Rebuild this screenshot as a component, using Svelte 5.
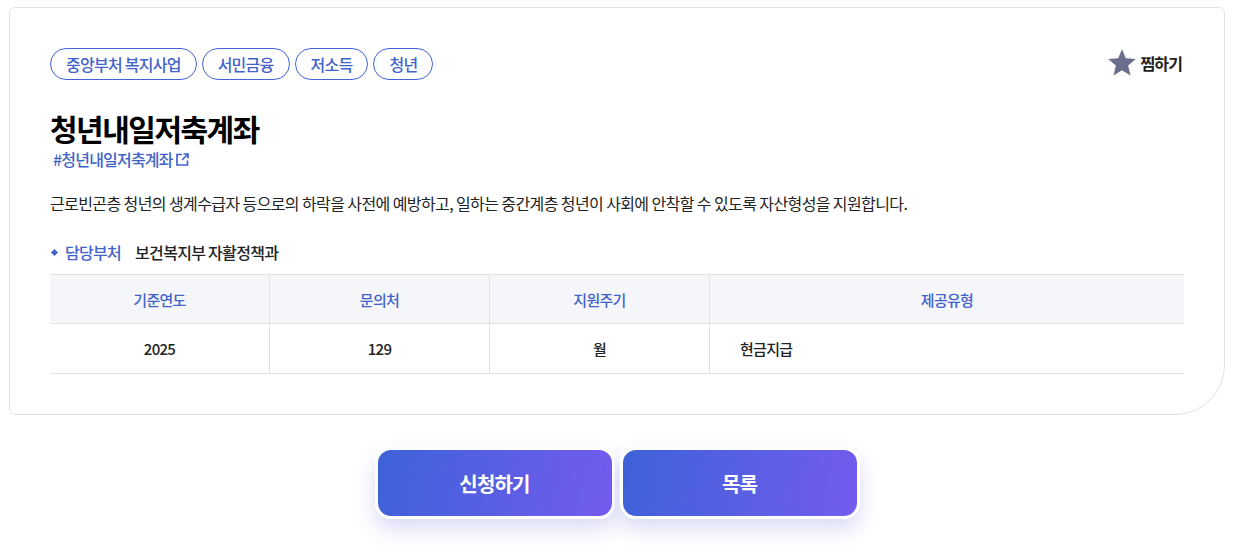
<script>
  const tags = ['중앙부처 복지사업', '서민금융', '저소득', '청년'];
  const heads = ['기준연도', '문의처', '지원주기', '제공유형'];
</script>

<div class="page">
  <section class="card">
    <div class="top">
      <ul class="tags">
        {#each tags as tag}
          <li>{tag}</li>
        {/each}
      </ul>
      <button class="fav">
        <svg width="30" height="30" viewBox="0 0 24 24"><path d="M12 1.500l3 7.400 8 .7-6.100 5.200 1.900 7.900L12 18.500 5.200 22.700l1.900-7.900L1 9.600l8-.7z" fill="#6b6d8c"/></svg>
        찜하기
      </button>
    </div>

    <h1>청년내일저축계좌</h1>
    <a class="hash" href="#top">#청년내일저축계좌<svg width="13" height="13" viewBox="0 0 13 13" fill="none" stroke="#4263d8" stroke-width="1.700"><path d="M6 1.500H1v10.500h10.500V7.500"/><path d="M6 7L11.500 1.500M7.500 1h4.500v4.500"/></svg></a>

    <p class="desc">근로빈곤층 청년의 생계수급자 등으로의 하락을 사전에 예방하고, 일하는 중간계층 청년이 사회에 안착할 수 있도록 자산형성을 지원합니다.</p>

    <div class="dept">
      <i></i>
      <strong>담당부처</strong>
      <span>보건복지부 자활정책과</span>
    </div>

    <div class="table">
      {#each heads as h}
        <div class="th">{h}</div>
      {/each}
      <div class="td">2025</div>
      <div class="td">129</div>
      <div class="td">월</div>
      <div class="td left">현금지급</div>
    </div>
  </section>

  <div class="actions">
    <button class="cta">신청하기</button>
    <button class="cta">목록</button>
  </div>
</div>

<style>
  :global(body) {
    margin: 0;
    background: #fff;
    font-family: "Noto Sans CJK KR", "Noto Sans", sans-serif;
  }

  .page {
    padding: 7px 8px 0 9px;
    height: 546px;
    overflow: hidden;
  }

  .card {
    box-sizing: border-box;
    height: 408px;
    padding: 40px 40px 0 40px;
    border: 1px solid #e2e2e2;
    border-radius: 6px 6px 50px 6px;
  }

  .top {
    display: flex;
    justify-content: space-between;
    align-items: center;
    height: 32px;
  }

  .tags {
    display: flex;
    gap: 5px;
    margin: 0;
    padding: 0;
    list-style: none;
  }

  .tags li {
    box-sizing: border-box;
    height: 32px;
    padding: 0 15px;
    border: 1px solid #4263d8;
    border-radius: 16px;
    color: #4263c8;
    font-size: 16px;
    font-weight: 500;
    line-height: 30px;
    letter-spacing: -0.75px;
  }

  .fav {
    display: flex;
    align-items: center;
    gap: 3px;
    height: 30px;
    padding: 0;
    margin: -2px 2px 0 0;
    border: 0;
    background: none;
    color: #222;
    font: 700 16px "Noto Sans CJK KR", sans-serif;
    letter-spacing: -0.9px;
  }

  .fav svg { margin: -3px 1px 0 -2px; }

  h1 {
    margin: 29px 0 0;
    color: #000;
    font-size: 30px;
    font-weight: 700;
    line-height: 38px;
    letter-spacing: -1.5px;
  }

  .hash {
    display: flex;
    align-items: center;
    gap: 3px;
    height: 24px;
    margin-left: 3px;
    color: #4263c8;
    font-size: 16px;
    font-weight: 500;
    letter-spacing: -0.8px;
    text-decoration: none;
  }

  .desc {
    margin: 21px 0 0;
    color: #222;
    font-size: 16px;
    line-height: 22px;
    letter-spacing: -0.6px;
  }

  .dept {
    display: flex;
    align-items: center;
    height: 24px;
    margin-top: 26px;
    font-size: 16px;
    font-weight: 500;
    letter-spacing: -0.7px;
  }

  .dept i {
    width: 5px;
    height: 5px;
    margin: 0 8px 0 2px;
    background: #4263c8;
    transform: rotate(45deg);
  }

  .dept strong {
    margin-right: 14px;
    color: #4263c8;
    font-weight: 500;
  }

  .dept span { color: #222; }

  .table {
    display: grid;
    grid-template-columns: 220px 220px 220px 1fr;
    grid-template-rows: 49px 50px;
    margin-top: 10px;
    border-top: 1px solid #e2e2e2;
    font-size: 15px;
    font-weight: 500;
    letter-spacing: -0.7px;
  }

  .th, .td {
    display: flex;
    align-items: center;
    justify-content: center;
    border-bottom: 1px solid #e2e2e2;
    border-right: 1px solid #e2e2e2;
  }

  .th:nth-child(4n), .td:nth-child(4n) { border-right: 0; }

  .th {
    background: #f5f6fa;
    color: #4263c8;
  }

  .td { color: #222; }

  .td.left {
    justify-content: flex-start;
    padding-left: 30px;
  }

  .actions {
    display: flex;
    justify-content: center;
    gap: 5px;
    margin-top: 32px;
  }

  .cta {
    width: 240px;
    height: 72px;
    border: 3px solid #fff;
    border-radius: 16px;
    background: linear-gradient(100deg, #3e62d8, #735cee);
    box-shadow: 0 10px 20px rgba(90, 90, 220, 0.22);
    color: #fff;
    font: 700 20px "Noto Sans CJK KR", sans-serif;
    letter-spacing: -0.8px;
  }
</style>
